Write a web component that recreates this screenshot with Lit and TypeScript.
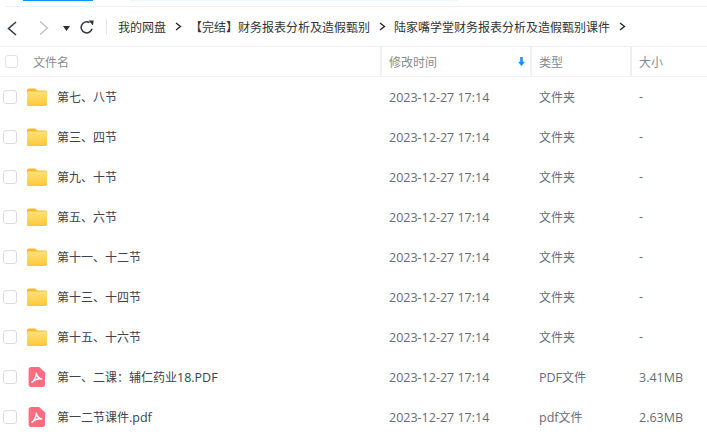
import { LitElement, html, css } from "lit";
import { customElement } from "lit/decorators.js";

const rows = [
  ["第七、八节", "文件夹", "-", "f"],
  ["第三、四节", "文件夹", "-", "f"],
  ["第九、十节", "文件夹", "-", "f"],
  ["第五、六节", "文件夹", "-", "f"],
  ["第十一、十二节", "文件夹", "-", "f"],
  ["第十三、十四节", "文件夹", "-", "f"],
  ["第十五、十六节", "文件夹", "-", "f"],
  ["第一、二课：辅仁药业18.PDF", "PDF文件", "3.41MB", "p"],
  ["第一二节课件.pdf", "pdf文件", "2.63MB", "p"],
];

/* Latin runs get their own wider font; CJK stays at 12px */
const txt = (s: string) =>
  s.split(/([\x21-\x7e ]+)/).map((p, i) => (i % 2 ? html`<span class="lat">${p}</span>` : p));

const folder = html`<svg class="ic" width="22" height="20" viewBox="0 0 22 20">
  <defs><linearGradient id="fg" x1="0" y1="0" x2="0" y2="1"><stop offset="0" stop-color="#ffe27a"/><stop offset="1" stop-color="#ffc639"/></linearGradient></defs>
  <path d="M1 3.5C1 2.2 1.8 1.5 3 1.5h5.5c.8 0 1.3.3 1.8.9L11.4 3.5H19c1.3 0 2 .8 2 2V8H1z" fill="#f9b82a"/>
  <rect x="1" y="4.6" width="20" height="14.4" rx="1.6" fill="url(#fg)"/>
</svg>`;

const pdf = html`<svg class="ic" width="22" height="20" viewBox="0 0 22 20">
  <path d="M5 0h8.2L19 5.6V17.6c0 1.3-1 2.4-2.4 2.4H5c-1.3 0-2.4-1.1-2.4-2.4V2.4C2.6 1.1 3.7 0 5 0z" fill="#ff6b7f"/>
  <path d="M5.8 15.2c2-1 3.6-3.6 4.7-8.6M10.3 6.2c.6 3 2.4 5.2 5.2 5.8M15.4 11.9c-3-.3-6.4.4-9.4 3.2" fill="none" stroke="#fff" stroke-width="1.5" stroke-linecap="round"/>
</svg>`;

const chev = html`<svg class="chev" width="7" height="9" viewBox="0 0 7 9"><path d="M1 1l4.5 3.5L1 8" fill="none" stroke="#222" stroke-width="1.3"/></svg>`;

@customElement("app-root")
export class AppRoot extends LitElement {
  static styles = css`
    :host { display: block; width: 707px; height: 445px; overflow: hidden; background: #fff;
      font-family: "Noto Sans CJK SC", "Liberation Sans", sans-serif; font-size: 12px; color: #454d5a; }
    .top { height: 7px; position: relative; overflow: hidden; }
    .top::after { content: ""; position: absolute; left: 5px; right: 0; bottom: 0; height: 1px; background: #eef0f3; }
    .top-btn { position: absolute; left: 23px; top: 0; width: 70px; height: 1px; background: #0a94fb; }
    .top-btn2 { position: absolute; left: 130px; top: 0; width: 328px; height: 1px; background: #eef7fe; }
    .nav { height: 39px; display: flex; align-items: center; border-bottom: 1px solid #eef0f3; }
    .nav svg { flex: none; }
    .back { margin: 4px 0 0 7px; }
    .fwd { margin: 3px 0 0 21px; }
    .drop { margin: 3px 0 0 14px; }
    .refresh { margin: 1px 0 0 10px; }
    .sep { width: 1px; height: 16px; background: #e3e5e8; flex: none; margin: 1px 11px 0 12px; }
    .crumb { display: flex; align-items: center; font-size: 12px; color: #333; white-space: nowrap; }
    .chev { margin: 0 8px 0 9px; }
    .head, .row { display: grid; grid-template-columns: 380px 150px 100px 77px; align-items: center; }
    .head { height: 29px; border-bottom: 1px solid #f0f1f3; color: #858b94; }
    .row { height: 40px; }
    .cell { display: flex; align-items: center; height: 100%; min-width: 0; white-space: nowrap; }
    .cell.b { border-left: 2px solid #eff0f2; padding-left: 7px; }
    .head .name { padding-left: 5px; }
    .cb { width: 12px; height: 12px; border: 1px solid #dfe0e3; border-radius: 3px; flex: none; background: #fff; }
    .head .cb { width: 11px; height: 11px; margin-right: 15px; }
    .row .cb { margin-left: 3px; margin-right: 9px; border-color: #d9dbde; }
    .ic { flex: none; margin-right: 9px; }
    .arrow { margin-left: auto; margin-right: 5px; flex: none; }
    .m { color: #666b74; padding-left: 9px; }
    .row .name { color: #3b4250; }
    .up { margin-bottom: 2px; }
    .lat { font-family: "Open Sans", "Liberation Sans", sans-serif; font-size: 12.5px; }
  `;

  render() {
    return html`
      <div class="top"><div class="top-btn"></div><div class="top-btn2"></div></div>
      <div class="nav">
        <svg class="back" width="10" height="15" viewBox="0 0 10 15"><path d="M9 1L1.5 7.5 9 14" fill="none" stroke="#2f3440" stroke-width="1.5"/></svg>
        <svg class="fwd" width="11" height="16" viewBox="0 0 11 16"><path d="M2 1.5L9.5 8 2 14.5" fill="none" stroke="#bfc2c7" stroke-width="1.4"/></svg>
        <svg class="drop" width="7" height="5" viewBox="0 0 7 5"><path d="M0 0h7L3.5 5z" fill="#2b2f38"/></svg>
        <svg class="refresh" width="14" height="14" viewBox="0 0 14 14"><path d="M12 8.8A5.5 5.5 0 1 1 9.4 2.6" fill="none" stroke="#2f3440" stroke-width="1.5"/><path d="M8.5.4L13.6.4 13 5.6z" fill="#2f3440"/></svg>
        <div class="sep"></div>
        <div class="crumb">我的网盘${chev}</div>
        <div class="crumb">【完结】财务报表分析及造假甄别${chev}</div>
        <div class="crumb">陆家嘴学堂财务报表分析及造假甄别课件${chev}</div>
      </div>
      <div class="head">
        <div class="cell name"><span class="cb"></span>文件名</div>
        <div class="cell b">修改时间<svg class="arrow" width="7" height="9" viewBox="0 0 7 9"><path d="M2.2 0h2.6v4.8H7L3.5 9 0 4.8h2.2z" fill="#1a90f5"/></svg></div>
        <div class="cell b">类型</div>
        <div class="cell b">大小</div>
      </div>
      ${rows.map(r => {
        const cls = r[3] === "f" ? "up" : "";
        return html`<div class="row">
          <div class="cell name"><span class="cb"></span>${r[3] === "f" ? folder : pdf}<span class=${cls}>${txt(r[0])}</span></div>
          <div class="cell m"><span class="lat">2023-12-27 17:14</span></div>
          <div class="cell m"><span class=${cls}>${txt(r[1])}</span></div>
          <div class="cell m"><span class=${cls}>${txt(r[2])}</span></div>
        </div>`;
      })}
    `;
  }
}
